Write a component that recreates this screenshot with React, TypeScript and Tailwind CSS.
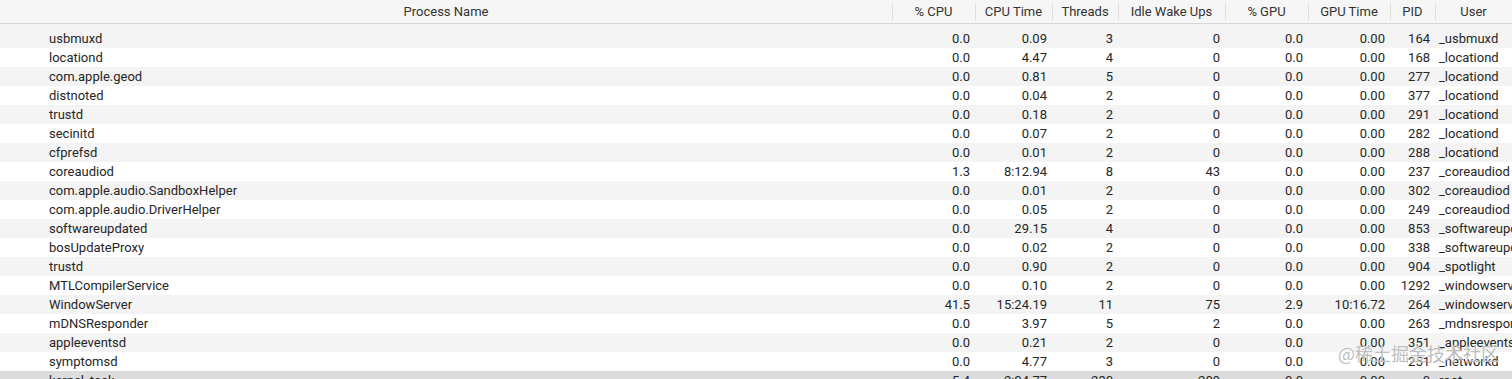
import React from "react";

type Row = [string, string, string, string, string, string, string, string, string];

const rows: Row[] = [
  ["usbmuxd", "0.0", "0.09", "3", "0", "0.0", "0.00", "164", "_usbmuxd"],
  ["locationd", "0.0", "4.47", "4", "0", "0.0", "0.00", "168", "_locationd"],
  ["com.apple.geod", "0.0", "0.81", "5", "0", "0.0", "0.00", "277", "_locationd"],
  ["distnoted", "0.0", "0.04", "2", "0", "0.0", "0.00", "377", "_locationd"],
  ["trustd", "0.0", "0.18", "2", "0", "0.0", "0.00", "291", "_locationd"],
  ["secinitd", "0.0", "0.07", "2", "0", "0.0", "0.00", "282", "_locationd"],
  ["cfprefsd", "0.0", "0.01", "2", "0", "0.0", "0.00", "288", "_locationd"],
  ["coreaudiod", "1.3", "8:12.94", "8", "43", "0.0", "0.00", "237", "_coreaudiod"],
  ["com.apple.audio.SandboxHelper", "0.0", "0.01", "2", "0", "0.0", "0.00", "302", "_coreaudiod"],
  ["com.apple.audio.DriverHelper", "0.0", "0.05", "2", "0", "0.0", "0.00", "249", "_coreaudiod"],
  ["softwareupdated", "0.0", "29.15", "4", "0", "0.0", "0.00", "853", "_softwareupdate"],
  ["bosUpdateProxy", "0.0", "0.02", "2", "0", "0.0", "0.00", "338", "_softwareupdate"],
  ["trustd", "0.0", "0.90", "2", "0", "0.0", "0.00", "904", "_spotlight"],
  ["MTLCompilerService", "0.0", "0.10", "2", "0", "0.0", "0.00", "1292", "_windowserver"],
  ["WindowServer", "41.5", "15:24.19", "11", "75", "2.9", "10:16.72", "264", "_windowserver"],
  ["mDNSResponder", "0.0", "3.97", "5", "2", "0.0", "0.00", "263", "_mdnsresponder"],
  ["appleeventsd", "0.0", "0.21", "2", "0", "0.0", "0.00", "351", "_appleevents"],
  ["symptomsd", "0.0", "4.77", "3", "0", "0.0", "0.00", "251", "_networkd"],
  ["kernel_task", "5.4", "2:04.77", "230", "209", "0.0", "0.00", "0", "root"],
];

const headers = ["Process Name", "% CPU", "CPU Time", "Threads", "Idle Wake Ups", "% GPU", "GPU Time", "PID", "User"];

const grid = "grid grid-cols-[892px_83px_77px_66px_107px_83px_82px_45px_1fr]";

export default function App() {
  return (
    <div
      className="relative w-[1512px] h-[379px] overflow-hidden bg-white text-[13px] text-[#262626]"
      style={{ fontFamily: "Roboto, 'Noto Sans', 'Liberation Sans', sans-serif" }}
    >
      <div className={`${grid} h-[24px] bg-[#f6f6f6] border-b border-[#d4d4d4] text-[#333]`}>
        {headers.map((h, i) => (
          <div key={h} className="relative flex items-center justify-center h-[23px] whitespace-nowrap overflow-hidden">
            {i > 0 && <div className="absolute left-0 top-[3px] h-[17px] w-px bg-[#dedede]" />}
            {h}
          </div>
        ))}
      </div>
      <div className="h-[5px] bg-[#f4f4f4]" />
      {rows.map((r, idx) => {
        const last = idx === rows.length - 1;
        const bg = last ? "bg-[#dcdcdc]" : idx % 2 === 0 ? "bg-[#f4f4f4]" : "bg-white";
        return (
          <div key={idx} className={`${grid} h-[19px] leading-[19px] ${bg}`}>
            <div className="pl-[49px] whitespace-nowrap overflow-hidden">{r[0]}</div>
            {r.slice(1, 8).map((v, j) => (
              <div key={j} className="text-right pr-[5px] whitespace-nowrap">
                {v}
              </div>
            ))}
            <div className="pl-[4px] whitespace-nowrap overflow-hidden">{r[8]}</div>
          </div>
        );
      })}
      <div
        className="absolute left-[1338px] top-[342px] text-[18px] leading-[22px] text-[#bdbdbd] whitespace-nowrap"
        style={{ fontFamily: "'Noto Sans CJK SC', 'Noto Sans', sans-serif", textShadow: "0 0 1px #ffffff" }}
      >
        @稀土掘金技术社区
      </div>
    </div>
  );
}
